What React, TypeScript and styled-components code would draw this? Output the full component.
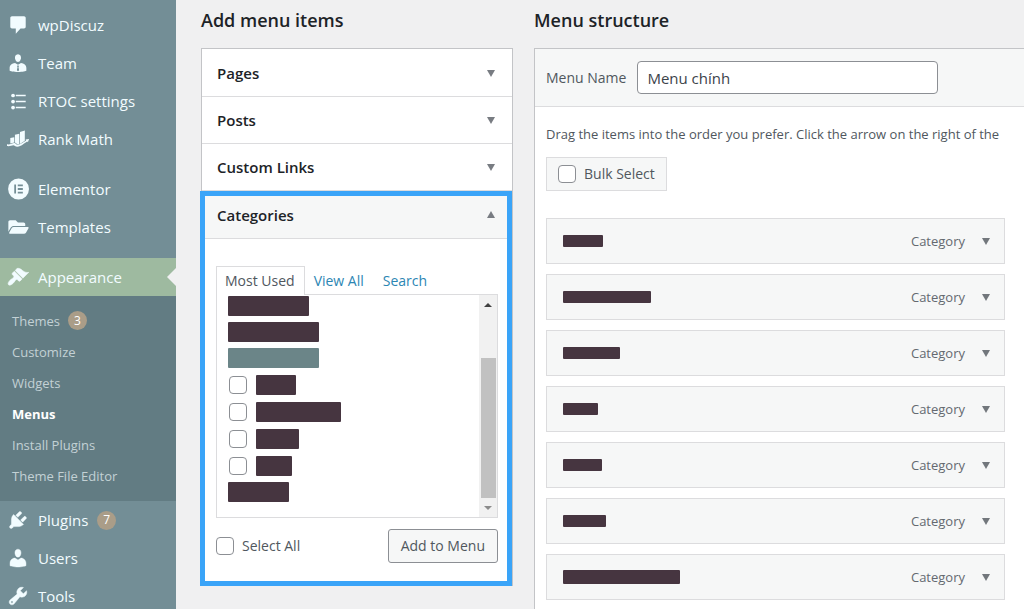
import React from "react";
import styled, { createGlobalStyle, css } from "styled-components";
import { FaFolderOpen } from "react-icons/fa";

const GlobalStyle = createGlobalStyle`
  *, *::before, *::after { box-sizing: border-box; }
  body {
    margin: 0;
    background: #f0f0f1;
    color: #50575e;
    font-family: "Open Sans", "Noto Sans", sans-serif;
    font-size: 14px;
    line-height: 22px;
  }
  button, input { font: inherit; color: inherit; }
  h2, h3, p, ul { margin: 0; padding: 0; }
  ul { list-style: none; }
  a { text-decoration: none; }
`;

const Shell = styled.div`
  display: flex;
  height: 100vh;
  overflow: hidden;
`;

/* ---------- admin sidebar ---------- */

const Sidebar = styled.nav`
  flex: 0 0 176px;
  padding-top: 6px;
  background: #738e96;
`;

const Group = styled.ul`
  margin-bottom: 12px;
`;

const MenuLink = styled.a<{ $current?: boolean }>`
  position: relative;
  display: flex;
  align-items: center;
  gap: 9px;
  height: 38px;
  padding-left: 7px;
  color: #f2fcff;
  font-size: 15px;
  ${(p) =>
    p.$current &&
    css`
      background: #9ebaa0;
      &::after {
        content: "";
        position: absolute;
        right: 0;
        border: 9px solid transparent;
        border-left-width: 0;
        border-right-color: #f0f0f1;
      }
    `}
`;

const IconSvg = styled.svg`
  flex: none;
  width: 22px;
  height: 22px;
  fill: #f2fcff;
`;

const FolderIcon = styled(FaFolderOpen)`
  flex: none;
  width: 22px;
  height: 18px;
  padding-left: 1px;
`;

const Badge = styled.span`
  display: inline-flex;
  align-items: center;
  justify-content: center;
  width: 19px;
  height: 19px;
  border-radius: 50%;
  background: #aa9d88;
  color: #fff;
  font-size: 12px;
`;

const Submenu = styled.ul`
  padding: 9px 0 10px;
  background: #627c83;
`;

const SubLink = styled.a<{ $current?: boolean }>`
  display: flex;
  align-items: center;
  gap: 8px;
  height: 31px;
  padding-left: 12px;
  color: ${(p) => (p.$current ? "#fff" : "#c3d1d5")};
  font-size: 13px;
  font-weight: ${(p) => (p.$current ? 700 : 400)};
`;

/* ---------- shared parts ---------- */

const Main = styled.main`
  flex: 1;
  min-width: 0;
  display: flex;
  gap: 21px;
  padding: 7px 0 0 25px;
`;

const Heading = styled.h2`
  height: 41px;
  color: #1d2327;
  font-size: 18px;
  font-weight: 600;
  line-height: 26px;
`;

const Triangle = styled.span<{ $up?: boolean; $small?: boolean }>`
  width: 0;
  height: 0;
  border: solid transparent;
  border-width: 0 4px;
  ${(p) =>
    p.$up
      ? css`border-bottom: ${p.$small ? 4 : 7}px solid currentColor;`
      : css`border-top: ${p.$small ? 4 : 7}px solid currentColor;`}
`;

const Checkbox = styled.input.attrs({ type: "checkbox" })`
  appearance: none;
  flex: none;
  width: 18px;
  height: 18px;
  margin: 0;
  border: 1px solid #8c8f94;
  border-radius: 4px;
  background: #fff;
`;

const CheckLabel = styled.label`
  display: flex;
  align-items: center;
  gap: 8px;
`;

const Redacted = styled.span<{ $w: number; $h: number; $teal?: boolean }>`
  flex: none;
  width: ${(p) => p.$w}px;
  height: ${(p) => p.$h}px;
  border-radius: 1px;
  background: ${(p) => (p.$teal ? "#6b8588" : "#463540")};
`;

/* ---------- "Add menu items" column ---------- */

const AddColumn = styled.section`
  flex: 0 0 312px;
`;

const Accordion = styled.div`
  padding-top: 1px;
  border: 1px solid #c3c4c7;
  border-bottom: 0;
  background: #fff;
`;

const AccordionHead = styled.button<{ $open?: boolean }>`
  display: flex;
  align-items: center;
  justify-content: space-between;
  width: 100%;
  height: ${(p) => (p.$open ? 48 : 47)}px;
  padding: 0 17px 0 15px;
  border: 0;
  border-bottom: 1px solid #dcdcde;
  background: ${(p) => (p.$open ? "#f6f7f7" : "#fff")};
  color: #1d2327;
  font-size: 15px;
  font-weight: 600;
  ${Triangle} { color: #787c82; }
`;

const OpenSection = styled.section`
  position: relative;
  &::after {
    content: "";
    position: absolute;
    inset: 0 0 0 -2px;
    border: 5px solid #3aa4f8;
    pointer-events: none;
  }
`;

const SectionBody = styled.div`
  padding: 27px 14px 23px;
`;

const Tabs = styled.div`
  position: relative;
  display: flex;
  height: 29px;
  margin-bottom: -1px;
`;

const Tab = styled.button<{ $active?: boolean }>`
  padding: 0 9px 0 8px;
  border: 1px solid transparent;
  border-bottom: 0;
  background: none;
  color: #2c86b3;
  ${(p) =>
    p.$active &&
    css`
      border-color: #dcdcde;
      background: #fff;
      color: #50575e;
    `}
`;

const ListBox = styled.div`
  display: flex;
  justify-content: space-between;
  height: 224px;
  border: 1px solid #dcdcde;
`;

const ItemList = styled.ul`
  display: flex;
  flex-direction: column;
  gap: 6px;
  padding: 1px 0 0 11px;
  overflow: hidden;
`;

const ListItem = styled.li<{ $check?: boolean }>`
  display: flex;
  align-items: center;
  height: ${(p) => (p.$check ? 21 : 20)}px;
  padding-left: ${(p) => (p.$check ? 1 : 0)}px;
  ${CheckLabel} { gap: 9px; }
`;

const Scrollbar = styled.div`
  display: flex;
  flex-direction: column;
  align-items: center;
  width: 18px;
  background: #f1f1f1;
`;

const ScrollButton = styled.button<{ $dim?: boolean }>`
  display: flex;
  align-items: center;
  justify-content: center;
  width: 100%;
  height: 19px;
  padding: 0;
  border: 0;
  background: none;
  color: ${(p) => (p.$dim ? "#8b8b8b" : "#404040")};
`;

const Track = styled.div`
  flex: 1;
  display: flex;
  flex-direction: column;
  justify-content: flex-end;
`;

const Thumb = styled.div`
  width: 15px;
  height: 140px;
  background: #c1c1c1;
`;

const Actions = styled.div`
  display: flex;
  align-items: center;
  justify-content: space-between;
  margin-top: 11px;
`;

const AddButton = styled.button`
  height: 34px;
  padding: 0 12px;
  border: 1px solid #8c8f94;
  border-radius: 3px;
  background: #f6f7f7;
`;

/* ---------- "Menu structure" column ---------- */

const StructureColumn = styled.section`
  flex: 1;
  min-width: 0;
  display: flex;
  flex-direction: column;
`;

const Panel = styled.div`
  flex: 1;
  border: 1px solid #c3c4c7;
  border-width: 1px 0 0 1px;
  background: #fff;
`;

const PanelHead = styled.div`
  display: flex;
  align-items: center;
  gap: 11px;
  height: 58px;
  padding-left: 11px;
  border-bottom: 1px solid #dcdcde;
  background: #f6f7f7;
`;

const NameInput = styled.input`
  width: 301px;
  height: 33px;
  padding: 0 9px;
  border: 1px solid #8c8f94;
  border-radius: 4px;
  background: #fff;
  color: #3c434a;
  font-size: 15px;
`;

const PanelBody = styled.div`
  padding: 16px 0 0 11px;
`;

const Hint = styled.p`
  font-size: 13px;
  white-space: nowrap;
`;

const BulkSelect = styled(CheckLabel)`
  width: fit-content;
  height: 34px;
  margin: 12px 0 27px;
  padding: 0 11px;
  border: 1px solid #dcdcde;
  background: #f6f7f7;
`;

const MenuItems = styled.ul`
  display: flex;
  flex-direction: column;
  gap: 10px;
  margin-right: 19px;
`;

const MenuItem = styled.li`
  display: flex;
  align-items: center;
  height: 46px;
  padding: 0 14px 0 16px;
  border: 1px solid #dcdcde;
  background: #f6f7f7;
  color: #646970;
`;

const ItemType = styled.span`
  margin-left: auto;
  font-size: 13px;
`;

const ItemToggle = styled.button`
  display: flex;
  margin-left: 17px;
  padding: 0;
  border: 0;
  background: none;
  color: #72777c;
`;

/* ---------- icons ---------- */

const icon = (body: React.ReactNode) => (
  <IconSvg viewBox="0 0 20 20" aria-hidden="true">
    {body}
  </IconSvg>
);

const icons = {
  comment: icon(
    <path d="M4.500 2h11c.8 0 1.500.7 1.500 1.500v8.200c0 .8-.7 1.500-1.500 1.500h-3.200L8 18v-4.800H4.500c-.8 0-1.500-.7-1.500-1.500V3.500C3 2.700 3.700 2 4.500 2z" />
  ),
  team: icon(
    <path
      fillRule="evenodd"
      d="M10 9.200C7.900 9.200 7.300 6 7.300 6 7 4 7.900 2 10 2s3 2 2.700 4c0 0-.6 3.200-2.700 3.200zM7.300 10 10 11.700 12.700 10c2.700.1 4.900 2.100 4.900 4.500V17s-3.800 1.200-7.600 1.200S2.400 17 2.400 17v-2.500c0-2.400 2.200-4.400 4.900-4.500zM9.400 12.300l-.3.700.5.700-.6 2.900 1 .9 1-.9-.6-2.900.5-.7-.3-.7z"
    />
  ),
  list: icon(
    <>
      <circle cx="5.500" cy="5" r="1.700" />
      <circle cx="5.500" cy="10.500" r="1.700" />
      <circle cx="5.500" cy="16" r="1.700" />
      <path d="M8 4.300h9v1.400H8zM8 9.800h9v1.400H8zM8 15.300h9v1.400H8z" />
    </>
  ),
  chart: icon(
    <>
      <path d="M3 9.200 6.600 8.300v4.900l-3.600.8zM7.200 6.200l4-1v9.300l-1.400.6-2.600-2zM11.800 3.600l4.400-1.300v9.300l-4.400 3z" />
      <path d="M0 14.800c2.800.6 5-1.300 6.700-1.100 1.300.2 1.600 1.500 2.900 1.500 2.800 0 5.500-2.700 7.800-3.800l-.5-.9 3.200-.5-1.100 3-.6-.7c-2.800 1.400-5.500 4.700-9 4.700-2 0-2.500-1.400-3.700-1.400-1.500 0-3.100 1.400-6 .7z" />
    </>
  ),
  elementor: icon(
    <path
      fillRule="evenodd"
      d="M10.500.5a9.500 9.500 0 1 1 0 19 9.500 9.500 0 0 1 0-19zM6.600 6v8h1.600V6zM9.800 6v1.600h4.600V6zM9.800 9.200v1.600h4.600V9.200zM9.800 12.400V14h4.600v-1.600z"
    />
  ),
  brush: icon(
    <path
      stroke="#f2fcff"
      strokeWidth=".5"
      d="M14.480 11.060L7.410 3.990l1.500-1.500c.5-.56 2.300-.47 3.510.32 1.210.8 1.430 1.280 2.910 2.100 1.180.64 2.450 1.260 4.450.85zm-.71.71L6.700 4.700 4.930 6.470c-.39.39-.39 1.020 0 1.410l1.060 1.060c.39.39.39 1.030 0 1.420-.6.6-1.430 1.110-2.210 1.690-.35.26-.7.53-1.010.84C1.430 14.230.4 16.080 1.400 17.070c.99 1 2.840-.03 4.180-1.360.31-.31.58-.66.85-1.020.57-.78 1.080-1.610 1.690-2.210.39-.39 1.020-.39 1.410 0l1.060 1.060c.39.39 1.020.39 1.410 0z"
    />
  ),
  plug: icon(
    <path
      stroke="#f2fcff"
      strokeWidth=".4"
      d="M13.110 4.360L9.870 7.600 8 5.730l3.240-3.240c.35-.34 1.050-.2 1.560.32.52.51.66 1.210.31 1.550zm-8 1.770l.91-1.120 9.010 9.010-1.190.84c-.71.71-2.630 1.160-3.820 1.160H6.140L4.900 17.260c-.59.59-1.540.59-2.120 0-.59-.58-.59-1.530 0-2.120l1.240-1.240v-3.880c0-1.130.4-3.190 1.090-3.890zm7.260 3.970l3.240-3.240c.34-.35 1.040-.21 1.550.31.52.51.66 1.210.31 1.550l-3.240 3.250z"
    />
  ),
  user: icon(
    <path
      stroke="#f2fcff"
      strokeWidth=".4"
      d="M10 9.250c-2.270 0-2.730-3.440-2.730-3.440C7 4.020 7.820 2 9.970 2c2.160 0 2.980 2.020 2.710 3.810 0 0-.41 3.440-2.680 3.440zm0 2.570L12.720 10c2.390 0 4.520 2.330 4.520 4.530v2.490s-3.650 1.130-7.240 1.130c-3.650 0-7.240-1.130-7.240-1.130v-2.490c0-2.250 1.940-4.480 4.470-4.480z"
    />
  ),
  wrench: icon(
    <path
      stroke="#f2fcff"
      strokeWidth=".4"
      d="M16.680 9.770c-1.340 1.340-3.300 1.670-4.950.99l-5.410 6.520c-.99.99-2.590.99-3.580 0s-.99-2.590 0-3.570l6.520-5.420c-.68-1.650-.35-3.610.99-4.950 1.280-1.280 3.120-1.620 4.720-1.060l-2.890 2.890 2.820 2.820 2.860-2.870c.53 1.580.18 3.390-1.080 4.650zM3.810 16.210c.4.39 1.040.39 1.430 0 .4-.4.4-1.040 0-1.430-.39-.4-1.030-.4-1.430 0-.39.39-.39 1.030 0 1.430z"
    />
  ),
};

interface Entry {
  label: string;
  icon: React.ReactNode;
  badge?: number;
}

const pluginEntries: Entry[] = [
  { label: "wpDiscuz", icon: icons.comment },
  { label: "Team", icon: icons.team },
  { label: "RTOC settings", icon: icons.list },
  { label: "Rank Math", icon: icons.chart },
];

const builderEntries: Entry[] = [
  { label: "Elementor", icon: icons.elementor },
  { label: "Templates", icon: <FolderIcon aria-hidden="true" /> },
];

const adminEntries: Entry[] = [
  { label: "Plugins", icon: icons.plug, badge: 7 },
  { label: "Users", icon: icons.user },
  { label: "Tools", icon: icons.wrench },
];

const appearanceEntries = [
  { label: "Themes", badge: 3 },
  { label: "Customize" },
  { label: "Widgets" },
  { label: "Menus", current: true },
  { label: "Install Plugins" },
  { label: "Theme File Editor" },
];

const categoryRows = [
  { w: 81 },
  { w: 91 },
  { w: 91, teal: true },
  { w: 40, check: true },
  { w: 85, check: true },
  { w: 43, check: true },
  { w: 36, check: true },
  { w: 61 },
];

const menuItemWidths = [40, 88, 57, 35, 39, 43, 117];

const Entries = ({ items }: { items: Entry[] }) => (
  <>
    {items.map((e) => (
      <li key={e.label}>
        <MenuLink href="#">
          {e.icon}
          {e.label}
          {e.badge && <Badge>{e.badge}</Badge>}
        </MenuLink>
      </li>
    ))}
  </>
);

export default function App() {
  return (
    <Shell>
      <GlobalStyle />
      <Sidebar aria-label="Admin menu">
        <Group>
          <Entries items={pluginEntries} />
        </Group>
        <Group>
          <Entries items={builderEntries} />
        </Group>
        <ul>
          <li>
            <MenuLink href="#" $current>
              {icons.brush}
              Appearance
            </MenuLink>
            <Submenu>
              {appearanceEntries.map((s) => (
                <li key={s.label}>
                  <SubLink href="#" $current={s.current}>
                    {s.label}
                    {s.badge && <Badge>{s.badge}</Badge>}
                  </SubLink>
                </li>
              ))}
            </Submenu>
          </li>
          <Entries items={adminEntries} />
        </ul>
      </Sidebar>

      <Main>
        <AddColumn>
          <Heading>Add menu items</Heading>
          <Accordion>
            {["Pages", "Posts", "Custom Links"].map((t) => (
              <AccordionHead key={t} type="button" aria-expanded={false}>
                {t}
                <Triangle />
              </AccordionHead>
            ))}
            <OpenSection>
              <AccordionHead type="button" aria-expanded $open>
                Categories
                <Triangle $up />
              </AccordionHead>
              <SectionBody>
                <Tabs role="tablist">
                  <Tab type="button" role="tab" aria-selected $active>
                    Most Used
                  </Tab>
                  <Tab type="button" role="tab">View All</Tab>
                  <Tab type="button" role="tab">Search</Tab>
                </Tabs>
                <ListBox>
                  <ItemList>
                    {categoryRows.map((r, i) => (
                      <ListItem key={i} $check={r.check}>
                        {r.check ? (
                          <CheckLabel>
                            <Checkbox aria-label={`Category ${i + 1}`} />
                            <Redacted $w={r.w} $h={20} />
                          </CheckLabel>
                        ) : (
                          <Redacted $w={r.w} $h={20} $teal={r.teal} />
                        )}
                      </ListItem>
                    ))}
                  </ItemList>
                  <Scrollbar>
                    <ScrollButton type="button" aria-label="Scroll up">
                      <Triangle $up $small />
                    </ScrollButton>
                    <Track>
                      <Thumb />
                    </Track>
                    <ScrollButton type="button" aria-label="Scroll down" $dim>
                      <Triangle $small />
                    </ScrollButton>
                  </Scrollbar>
                </ListBox>
                <Actions>
                  <CheckLabel>
                    <Checkbox />
                    Select All
                  </CheckLabel>
                  <AddButton type="button">Add to Menu</AddButton>
                </Actions>
              </SectionBody>
            </OpenSection>
          </Accordion>
        </AddColumn>

        <StructureColumn>
          <Heading>Menu structure</Heading>
          <Panel>
            <PanelHead>
              <label htmlFor="menu-name">Menu Name</label>
              <NameInput id="menu-name" type="text" defaultValue="Menu chính" />
            </PanelHead>
            <PanelBody>
              <Hint>
                Drag the items into the order you prefer. Click the arrow on the right of the
              </Hint>
              <BulkSelect>
                <Checkbox />
                Bulk Select
              </BulkSelect>
              <MenuItems>
                {menuItemWidths.map((w, i) => (
                  <MenuItem key={i}>
                    <Redacted $w={w} $h={w > 100 ? 14 : 12} />
                    <ItemType>Category</ItemType>
                    <ItemToggle type="button" aria-label="Edit menu item">
                      <Triangle />
                    </ItemToggle>
                  </MenuItem>
                ))}
              </MenuItems>
            </PanelBody>
          </Panel>
        </StructureColumn>
      </Main>
    </Shell>
  );
}
